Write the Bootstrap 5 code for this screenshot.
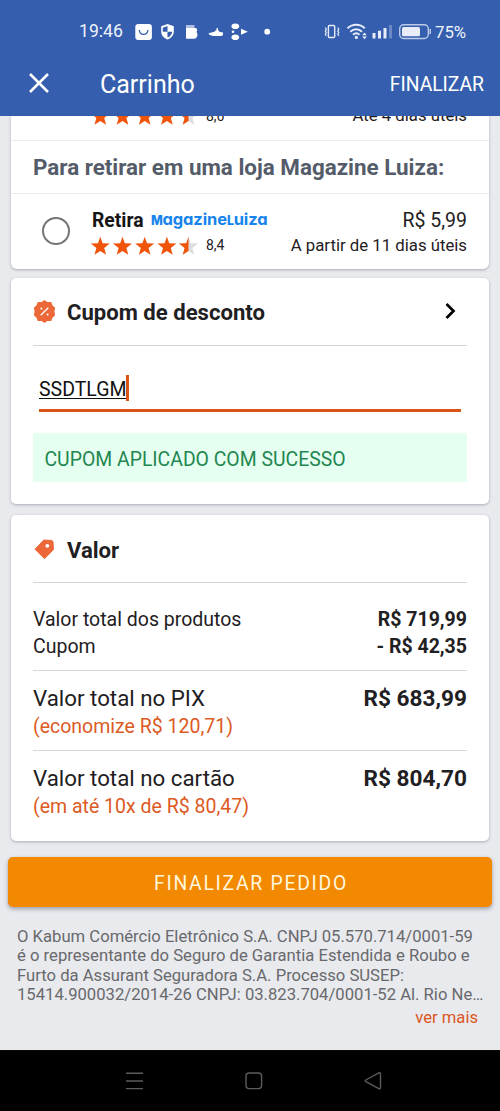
<!DOCTYPE html>
<html lang="pt-BR">
<head>
<meta charset="utf-8">
<meta name="viewport" content="width=device-width, initial-scale=1">
<title>Carrinho</title>
<link href="https://cdn.jsdelivr.net/npm/bootstrap@5.3.0/dist/css/bootstrap.min.css" rel="stylesheet">
<script src="https://cdn.jsdelivr.net/npm/bootstrap@5.3.0/dist/js/bootstrap.bundle.min.js" defer></script>
<style>
  body { font-family: Roboto, "Liberation Sans", sans-serif; background: #e9eaee; color: #1f2022; line-height: 1; height: 1111px; overflow: hidden; }
  svg { display: block; flex: none; }
  .app-head { background: #355fae; height: 116px; color: #fff; }
  .status { height: 63px; padding-left: 79px; color: #eef2fb; }
  .clock { font-size: 17.6px; width: 56px; padding-top: 1px; }
  .battery { font-size: 16.8px; padding-top: 1px; }
  .appbar { height: 42px; padding: 0 16px 0 28px; }
  .appbar h1 { font-size: 25px; margin-left: 50px; padding-top: 2px; font-weight: 400; }
  .act { font-size: 19.3px; padding-top: 1px; }
  .panel { margin: 0 11px; background: #fff; border-radius: 5px; box-shadow: 0 1px 3px rgba(40,45,70,.33); }
  .first { border-radius: 0 0 6px 6px; }
  .cut { height: 25px; overflow: hidden; border-bottom: 1.5px solid #ececee; padding: 0 22px 11px 80px; }
  .cut > div { height: 27px; flex: none; }
  .sec { height: 53px; border-bottom: 1.5px solid #ececee; padding: 0 0 0 22px; font-size: 22.4px; font-weight: 700; color: #545b69; }
  .opt { height: 75px; padding: 0 22px 0 31px; }
  .radio { width: 28px; height: 28px; border: 2.5px solid #757575; border-radius: 50%; margin-right: 21px; margin-bottom: 2px; }
  .ln { height: 25px; }
  .ln2 { height: 25px; padding-top: 2px; }
  .ln2 svg, .cut svg { margin-bottom: -1px; }
  .rate { font-size: 14px; margin-left: 8px; }
  .price { font-size: 19.5px; padding-top: 4px; }
  .when { font-size: 16.75px; }
  .retira { font-size: 19.3px; font-weight: 700; width: 60px; padding: 3px 0 0 1px; color: #151515; }
  .magalu { font-family: Inter, sans-serif; font-weight: 700; font-size: 16.5px; letter-spacing: -.1px; color: #1684ec; font-feature-settings: "cv11" 1, "ss01" 0; }
  .magalu span { font-size: 12.5px; font-weight: 800; letter-spacing: -.4px; }
  .ttl { font-size: 22.1px; font-weight: 700; height: 68px; margin: 0 22px; border-bottom: 1.5px solid #d3d4d8; }
  .ttl span { padding-top: 1px; }
  .ttl svg { margin-right: 11px; margin-bottom: 1px; }
  .field { margin: 26px 28px 0; height: 40px; border-bottom: 3px solid #dc5317; font-size: 19.5px; color: #111; }
  .field u { padding-top: 8px; text-decoration-thickness: 1px; text-underline-offset: 2px; text-decoration-skip-ink: none; }
  .caret { width: 3px; height: 26px; background: #dc5317; margin: 3px 0 0 -1px; }
  .ok { margin: 21px 22px 0; height: 49px; background: #e5fff1; color: #238650; font-size: 19.4px; padding: 4px 0 0 11.5px; }
  .rows { margin: 0 22px; }
  .r1 { height: 26.4px; font-size: 19.5px; }
  .big { height: 30px; font-size: 22.3px; }
  .fw-med { font-weight: 700; }
  .big .fw-med { font-size: 22.6px; padding-top: 3px; }
  .note { height: 28px; font-size: 19.5px; color: #dc5a1f; }
  .sep { border-top: 1.5px solid #d8d8da; }
  .cta { display: flex; margin: 16px 8px 0; padding: 4px 6px 0 8px; height: 50px; border-radius: 5px; background: #f28900; color: #fff6dc; font-size: 19.4px; letter-spacing: 1.7px; border: 0; box-shadow: 0 2px 4px rgba(40,45,70,.4); }
  .legal { margin: 20px 12px 0 17px; font-size: 16.65px; line-height: 19.4px; color: #68696c; white-space: nowrap; }
  .more { margin: 2px 22px 0; font-size: 16.6px; line-height: 22px; color: #d9571f; }
  .sysnav { height: 61px; background: #000; border-top: 1px solid #0a0a0a; }
</style>
</head>
<body class="d-flex flex-column">
<svg width="0" height="0" class="position-absolute">
  <defs>
    <path id="star" d="M9.300-.3 11.600 6.200 18.800 6.500 13.200 10.900 15.100 17.800 9.300 13.900 3.500 17.800 5.400 10.900-.2 6.500 7 6.200Z"/>
    <clipPath id="half"><rect x="-1" y="-1" width="10.300" height="20"/></clipPath>
    <g id="stars">
      <use href="#star" fill="#f0530a"/><use href="#star" x="22.2" fill="#f0530a"/><use href="#star" x="44.4" fill="#f0530a"/><use href="#star" x="66.6" fill="#f0530a"/>
      <g transform="translate(88.2)"><use href="#star" fill="#dddde0"/><use href="#star" fill="#f0530a" clip-path="url(#half)"/></g>
    </g>
  </defs>
</svg>
<header class="app-head flex-shrink-0">
  <div class="status d-flex align-items-center">
    <span class="clock">19:46</span>
    <svg width="120" height="20" viewBox="135 22 120 20" fill="#fff">
      <rect x="135.3" y="24" width="16.6" height="16" rx="3"/><path d="M139.3 30c.4 5.8 8.200 5.800 8.600 0" fill="none" stroke="#355fae" stroke-width="1.3"/>
      <path d="M167.500 24l6.300 2.300v5.200c0 4.200-2.800 6.700-6.300 7.900-3.500-1.200-6.300-3.700-6.300-7.900v-5.200z"/>
      <path d="M167.500 26v5.700h-4.700v-4zM167.500 31.700h4.700c-.2 3-2 4.700-4.700 5.900z" fill="#355fae"/>
      <path d="M186 25h8.500v3H186z" fill="#aebfe0"/><path d="M186 28h10c1.500 1 1.500 3 .4 4 2 2 1.200 6.700-2.400 6.700h-8z"/>
      <path d="M208.500 33.300l6-1.500 1.300-1.500h.7v-2.200h1.300l.4 2.200 1.200 1.500 3.600.8v2.300c-1 1-2 1.200-3 1.200h-7c-1.500-.8-4-.700-4.500-2.800z"/>
      <ellipse cx="235.300" cy="26.300" rx="3.800" ry="2.800"/><ellipse cx="235.300" cy="37.200" rx="3.800" ry="2.800"/><circle cx="233" cy="31.800" r="1.300"/><path d="M241 28.700l6.800 3-6.800 3z"/>
    </svg>
    <svg width="180" height="20" viewBox="255 22 180 20" fill="#e7ecf8">
      <circle cx="267.200" cy="31.700" r="2.900" fill="#fff"/>
      <rect x="328.400" y="25.500" width="6.300" height="12" rx="1" fill="none" stroke="#e7ecf8" stroke-width="1.400"/>
      <path d="M325.300 27.500l1 1.700-1 1.700 1 1.700-1 1.700 1 1.700M337.800 27.500l1 1.700-1 1.700 1 1.700-1 1.700 1 1.700" fill="none" stroke="#e7ecf8" stroke-width="1.200"/>
      <path d="M347.500 28.300c5-4.700 12.500-4.700 17.300 0M350.300 31.700c3.500-3.200 8.400-3.200 11.700 0M353 34.700c2-1.700 4.500-1.700 6.500 0" fill="none" stroke="#e7ecf8" stroke-width="2"/><circle cx="356.300" cy="37.400" r="1.600"/>
      <path d="M362.200 35.200l2.300-2.700 2.300 2.700zM362.200 36.500l2.300 2.700 2.300-2.700z"/>
      <path d="M372.500 33h3v5.500h-3zM378 30.700h3v7.800h-3zM383.500 28h3v10.500h-3z"/><path d="M389 25h3v13.500h-3z" fill="#6a89c6"/>
      <rect x="399.700" y="24.700" width="28.600" height="13.800" rx="4" fill="none" stroke="#bccae8" stroke-width="1.400"/><rect x="402" y="27" width="18" height="9.200" rx="1.500"/><path d="M429.500 29h1.500v5h-1.500z" fill="#bccae8"/>
    </svg>
    <span class="battery">75%</span>
  </div>
  <div class="appbar d-flex align-items-center">
    <svg width="22" height="22" viewBox="0 0 22 22"><path d="M2 1 20 19M20 1 2 19" stroke="#fff" stroke-width="2.500"/></svg>
    <h1 class="mb-0">Carrinho</h1>
    <span class="act ms-auto">FINALIZAR</span>
  </div>
</header>

<main class="flex-shrink-0">
  <section class="panel first">
    <div class="cut d-flex align-items-end justify-content-between">
      <div class="d-flex align-items-center"><svg width="107" height="18" overflow="visible"><use href="#stars"/></svg><span class="rate">8,6</span></div>
      <div class="d-flex align-items-center when">Até 4 dias úteis</div>
    </div>
    <div class="sec d-flex align-items-center">Para retirar em uma loja Magazine Luiza:</div>
    <div class="opt d-flex align-items-center">
      <span class="radio flex-shrink-0"></span>
      <div class="flex-grow-1">
        <div class="ln d-flex align-items-center"><span class="retira">Retira</span><span class="magalu"><span>M</span>agazine<span>L</span>uiza</span><span class="price ms-auto">R$ 5,99</span></div>
        <div class="ln2 d-flex align-items-center"><svg width="107" height="18" overflow="visible"><use href="#stars"/></svg><span class="rate">8,4</span><span class="when ms-auto">A partir de 11 dias úteis</span></div>
      </div>
    </div>
  </section>

  <section class="panel" style="height:226px;margin-top:9px">
    <div class="ttl d-flex align-items-center">
      <svg width="23" height="23" viewBox="0 0 23 23"><path d="M11.500.9 14.300 2.800 17.700 2.600 18.800 5.600 21.400 7.900 20.700 11.500 21.400 15.100 18.800 17.400 17.700 20.400 14.300 20.200 11.500 22.100 8.700 20.200 5.300 20.400 4.200 17.400 1.600 15.100 2.300 11.500 1.600 7.900 4.200 5.600 5.300 2.600 8.700 2.800Z" fill="#ec6839" stroke="#ec6839" stroke-width="1.400" stroke-linejoin="round"/><path d="M7.700 15.300l7.600-7.600" stroke="#fff" stroke-width="1.300"/><circle cx="8.400" cy="8.600" r="1" fill="#fff"/><circle cx="14.600" cy="14.500" r="1" fill="#fff"/></svg>
      <span>Cupom de desconto</span>
      <svg class="ms-auto me-2" width="17" height="18" viewBox="0 0 17 18"><path d="M4.500 2l7 7-7 7" fill="none" stroke="#000" stroke-width="2.700"/></svg>
    </div>
    <div class="field d-flex"><u>SSDTLGM</u><span class="caret"></span></div>
    <div class="ok d-flex align-items-center">CUPOM APLICADO COM SUCESSO</div>
  </section>

  <section class="panel" style="height:326px;margin-top:11px">
    <div class="ttl d-flex align-items-center">
      <svg width="23" height="23" viewBox="0 0 23 23"><path d="M2 12.200L10.800 3 18.800 3.500 20 4.600l.4 8L11.500 21.700z" fill="#ec6839" stroke="#ec6839" stroke-linejoin="round"/><circle cx="14.300" cy="8.800" r="1.900" fill="#fff"/></svg>
      <span class="pt-1">Valor</span>
    </div>
    <div class="rows">
      <div class="r1 d-flex justify-content-between align-items-center" style="margin-top:24px"><span>Valor total dos produtos</span><span class="fw-med">R$ 719,99</span></div>
      <div class="r1 d-flex justify-content-between align-items-center"><span>Cupom</span><span class="fw-med">- R$ 42,35</span></div>
      <div class="sep" style="margin-top:10px;padding-top:12px;height:80px">
        <div class="big d-flex justify-content-between align-items-center"><span>Valor total no PIX</span><span class="fw-med">R$ 683,99</span></div>
        <div class="note d-flex align-items-center">(economize R$ 120,71)</div>
      </div>
      <div class="sep" style="padding-top:12px">
        <div class="big d-flex justify-content-between align-items-center"><span>Valor total no cartão</span><span class="fw-med">R$ 804,70</span></div>
        <div class="note d-flex align-items-center">(em até 10x de R$ 80,47)</div>
      </div>
    </div>
  </section>

  <button class="cta align-items-center justify-content-center" style="width:484px">FINALIZAR PEDIDO</button>
  <div class="legal">O Kabum Comércio Eletrônico S.A. CNPJ 05.570.714/0001-59<br>é o representante do Seguro de Garantia Estendida e Roubo e<br>Furto da Assurant Seguradora S.A. Processo SUSEP:<br>15414.900032/2014-26 CNPJ: 03.823.704/0001-52 Al. Rio Ne…</div>
  <div class="more text-end">ver mais</div>
</main>

<nav class="sysnav mt-auto flex-shrink-0 d-flex align-items-center">
  <svg width="500" height="20" viewBox="0 0 500 20" fill="none" stroke="#5c5c5c" stroke-width="1.400"><path d="M126 2.300h17M126 10h17M126 17.600h17"/><rect x="246" y="2" width="15.600" height="15.600" rx="3"/><path d="M365.800 9l13-7q1.700-.7 1.700 1v13.600q0 1.700-1.700 1l-13-7q-1.300-.8 0-1.600z"/></svg>
</nav>
</body>
</html>
